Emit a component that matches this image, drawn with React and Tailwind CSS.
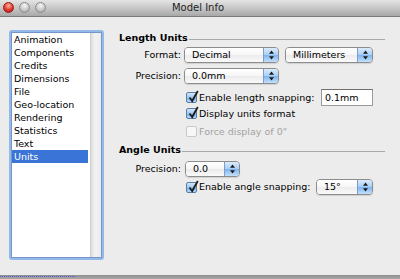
import React from 'react';

const items = ['Animation', 'Components', 'Credits', 'Dimensions', 'File', 'Geo-location', 'Rendering', 'Statistics', 'Text', 'Units'];

const Arrows = () => (
    <svg width="7" height="10" viewBox="0 0 7 10">
        <path d="M3.5 0.5 L6 3.8 H1 Z M3.5 9.5 L6 6.2 H1 Z" fill="#1a1a1a" />
    </svg>
);

const Popup = ({ label, className }) => (
    <div className={`flex h-[16px] rounded-[4px] border border-[#8c8c8c] overflow-hidden shadow-[0_1px_1px_rgba(0,0,0,0.12)] ${className}`}>
        <div className="flex-1 flex items-center pl-[7px] bg-[linear-gradient(#ffffff,#f6f6f6_50%,#ebebeb_51%,#fafafa)]">{label}</div>
        <div className="w-[15px] flex items-center justify-center border-l border-[#7d9cc6] bg-[linear-gradient(#dcebfc,#a9cff7_48%,#7fb4ef_52%,#c3e0fc)]">
            <Arrows />
        </div>
    </div>
);

const Check = ({ checked, disabled }) => (
    <div className={`relative w-[11px] h-[11px] rounded-[2px] border ${disabled ? 'border-[#c9c9c9] bg-[#f7f7f7]' : 'border-[#5d7ea9] bg-[linear-gradient(#d3e6fb,#9cc7f3_50%,#74acea_51%,#b5d8fa)]'}`}>
        {checked && (
            <svg className="absolute -top-[3px] left-[1px]" width="11" height="13" viewBox="0 0 11 13">
                <path d="M1.5 7.5 L4.2 11 L9.8 1" stroke="#1c1c1c" strokeWidth="1.8" fill="none" />
            </svg>
        )}
    </div>
);

const Heading = ({ children }) => (
    <div className="flex items-center h-[14px] font-bold">
        <span>{children}</span>
        <div className="flex-1 h-px bg-[#a9a9a9] ml-[1px] mt-[3px]" />
    </div>
);

const App = () => {
    return (
        <div className="w-[400px] h-[279px] overflow-hidden flex flex-col bg-[#ececec] text-black font-['DejaVu_Sans',sans-serif] text-[9.5px] leading-none">
            {/* title bar */}
            <div className="relative h-[17px] shrink-0 flex items-center justify-center border-b border-[#7a7a7a] bg-[linear-gradient(#e4e4e4,#c4c4c4_55%,#a8a8a8)]">
                <div className="absolute left-[3px] top-[2px] flex gap-[5px]">
                    <div className="w-[11px] h-[11px] rounded-full border border-[#9a1c14] bg-[radial-gradient(circle_at_50%_30%,#ffb3a6,#e0392c_55%,#a5140c)]" />
                    <div className="w-[11px] h-[11px] rounded-full border border-[#8d8d8d] bg-[radial-gradient(circle_at_50%_30%,#f6f6f6,#c8c8c8_55%,#9c9c9c)]" />
                    <div className="w-[11px] h-[11px] rounded-full border border-[#8d8d8d] bg-[radial-gradient(circle_at_50%_30%,#f6f6f6,#c8c8c8_55%,#9c9c9c)]" />
                </div>
                <span className="text-[10px] text-[#1e1e1e] -ml-[4px]">Model Info</span>
            </div>

            {/* body */}
            <div className="flex-1 flex pt-[13px] pl-[9px]">
                <div className="w-[95px] h-[230px] border-2 border-[#93b9ea] rounded-[3px] flex">
                    <div className="flex-1 flex border border-[#7497c8] bg-white">
                        <div className="flex-1 flex flex-col">
                            {items.map((it) => (
                                <div
                                    key={it}
                                    className={`h-[13px] flex items-center pl-[2px] ${it === 'Units' ? 'bg-[#3a74d6] text-white mr-[2px]' : ''}`}
                                >
                                    {it}
                                </div>
                            ))}
                        </div>
                        <div className="w-[11px] border-l border-[#cfcfcf] bg-[linear-gradient(90deg,#dedede,#f2f2f2_40%,#ebebeb)]" />
                    </div>
                </div>

                <div className="w-[266px] ml-[15px] flex flex-col">
                    <div className="mt-[1px]">
                        <Heading>Length Units</Heading>
                    </div>
                    <div className="mt-[2px] flex items-center gap-[3px]">
                        <div className="w-[62px] text-right">Format:</div>
                        <Popup label="Decimal" className="w-[95px]" />
                        <Popup label="Millimeters" className="w-[88px] ml-[3px]" />
                    </div>
                    <div className="mt-[5px] flex items-center gap-[3px]">
                        <div className="w-[62px] text-right">Precision:</div>
                        <Popup label="0.0mm" className="w-[95px]" />
                    </div>
                    <div className="mt-[5px] ml-[67px] w-[187px] h-[17px] flex items-center">
                        <Check checked />
                        <span className="ml-[2px]">Enable length snapping:</span>
                        <div className="ml-auto w-[52px] h-[17px] flex items-center pl-[3px] bg-white border border-[#9a9a9a] border-t-[#6f6f6f]">0.1mm</div>
                    </div>
                    <div className="ml-[67px] h-[15px] flex items-center">
                        <Check checked />
                        <span className="ml-[2px]">Display units format</span>
                    </div>
                    <div className="mt-[3px] ml-[67px] h-[15px] flex items-center text-[#a3a3a3]">
                        <Check disabled />
                        <span className="ml-[2px]">Force display of 0"</span>
                    </div>
                    <div className="mt-[4px]">
                        <Heading>Angle Units</Heading>
                    </div>
                    <div className="mt-[4px] flex items-center gap-[3px]">
                        <div className="w-[62px] text-right">Precision:</div>
                        <Popup label="0.0" className="w-[55px] ml-[1px]" />
                    </div>
                    <div className="mt-[2px] ml-[67px] w-[187px] h-[16px] flex items-center">
                        <Check checked />
                        <span className="ml-[2px]">Enable angle snapping:</span>
                        <Popup label="15°" className="ml-auto w-[57px]" />
                    </div>
                </div>
            </div>

            {/* bottom edge */}
            <div className="h-[4px] shrink-0 flex bg-[linear-gradient(#8f8f8f,#a8a8a8)]">
                <div className="w-[75px] h-px mt-[1px] border-t border-dotted border-[#5a5ae0]" />
            </div>
        </div>
    );
};

export default App;
